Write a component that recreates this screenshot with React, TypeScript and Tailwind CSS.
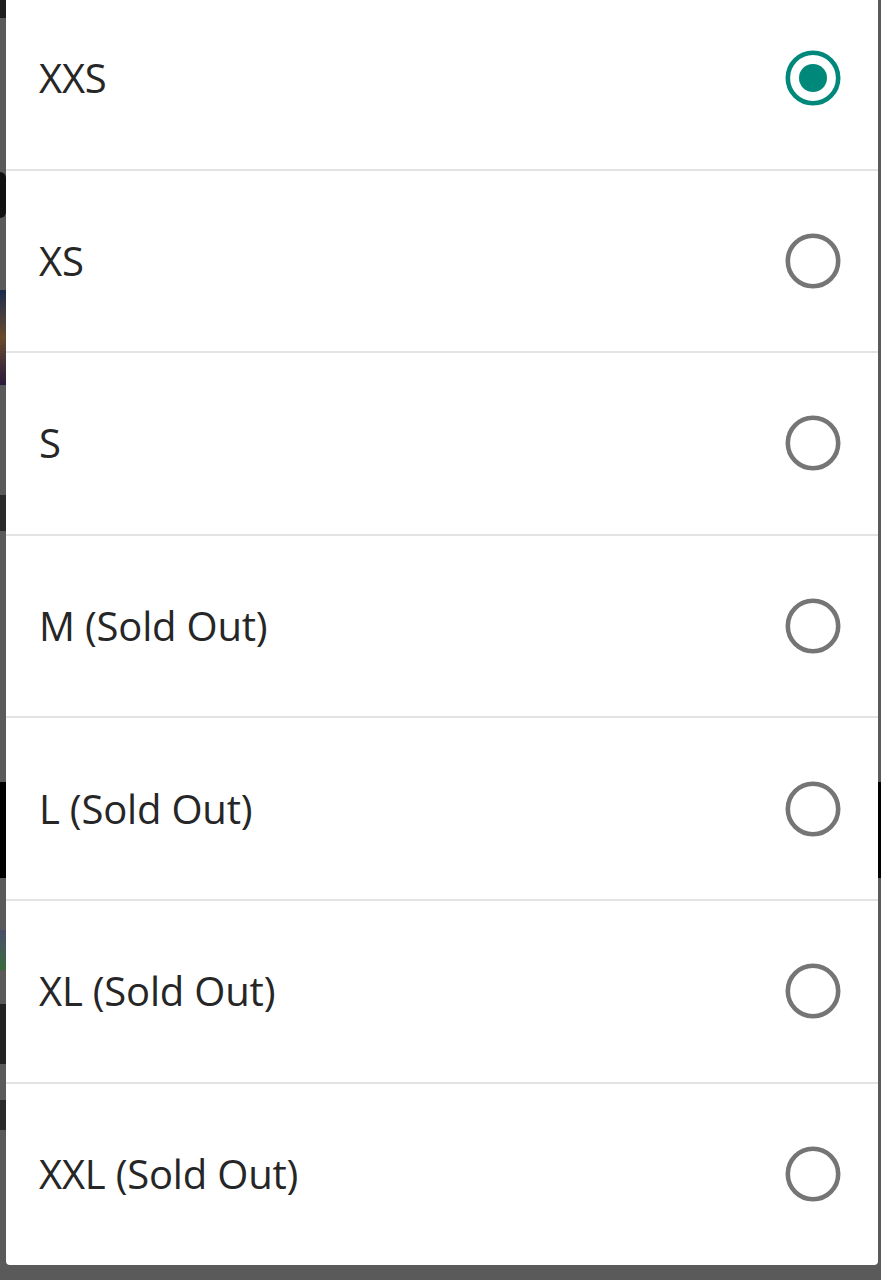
import React from "react";

const options = [
  { label: "XXS", checked: true },
  { label: "XS" },
  { label: "S" },
  { label: "M (Sold Out)" },
  { label: "L (Sold Out)" },
  { label: "XL (Sold Out)" },
  { label: "XXL (Sold Out)" },
];

function Radio({ checked }: { checked?: boolean }) {
  return (
    <svg width="58" height="58" viewBox="0 0 58 58" className="shrink-0">
      <circle
        cx="29"
        cy="29"
        r="25.2"
        fill="none"
        stroke={checked ? "#00897b" : "#757575"}
        strokeWidth="4.6"
      />
      {checked && <circle cx="29" cy="29" r="14" fill="#00897b" />}
    </svg>
  );
}

export default function App() {
  return (
    <div className="flex h-[1280px] w-[881px] overflow-hidden bg-[#5a5a5a]">
      {/* dimmed page content peeking out on the left */}
      <div className="flex w-[6px] shrink-0 flex-col">
        <div className="h-[18px] bg-[#1e1e1e]" />
        <div className="h-[154px]" />
        <div className="h-[46px] rounded-r-full bg-[#111]" />
        <div className="h-[72px]" />
        <div className="h-[95px] bg-gradient-to-b from-[#1a2a4a] via-[#6a4a2a] to-[#2a1a3a]" />
        <div className="h-[110px]" />
        <div className="h-[36px] bg-[#2a2a2a]" />
        <div className="h-[251px]" />
        <div className="h-[96px] bg-black" />
        <div className="h-[52px]" />
        <div className="h-[40px] bg-gradient-to-b from-[#4a4d6a] to-[#3a6a3a]" />
        <div className="h-[34px]" />
        <div className="h-[60px] bg-[#222]" />
        <div className="h-[36px]" />
        <div className="h-[30px] bg-[#2a2a2a]" />
      </div>

      {/* dialog */}
      <div className="flex w-[872px] shrink-0 flex-col">
        <div
          className="mt-[-12px] overflow-hidden rounded-[4px] bg-white"
          style={{ fontFamily: '"Open Sans", "Noto Sans", sans-serif' }}
        >
          {options.map((o, i) => (
            <div
              key={o.label}
              className={`flex items-center justify-between pl-[33px] pr-[36px] ${
                i < options.length - 1
                  ? "h-[182.6px] border-b-2 border-[#e3e3e3]"
                  : "h-[181px]"
              }`}
            >
              <span className="text-[40px] leading-none tracking-[-0.2px] text-[#262626]">
                {o.label}
              </span>
              <Radio checked={o.checked} />
            </div>
          ))}
        </div>
      </div>

      {/* right edge */}
      <div className="flex w-[3px] shrink-0 flex-col">
        <div className="h-[782px]" />
        <div className="h-[96px] bg-black" />
      </div>
    </div>
  );
}
